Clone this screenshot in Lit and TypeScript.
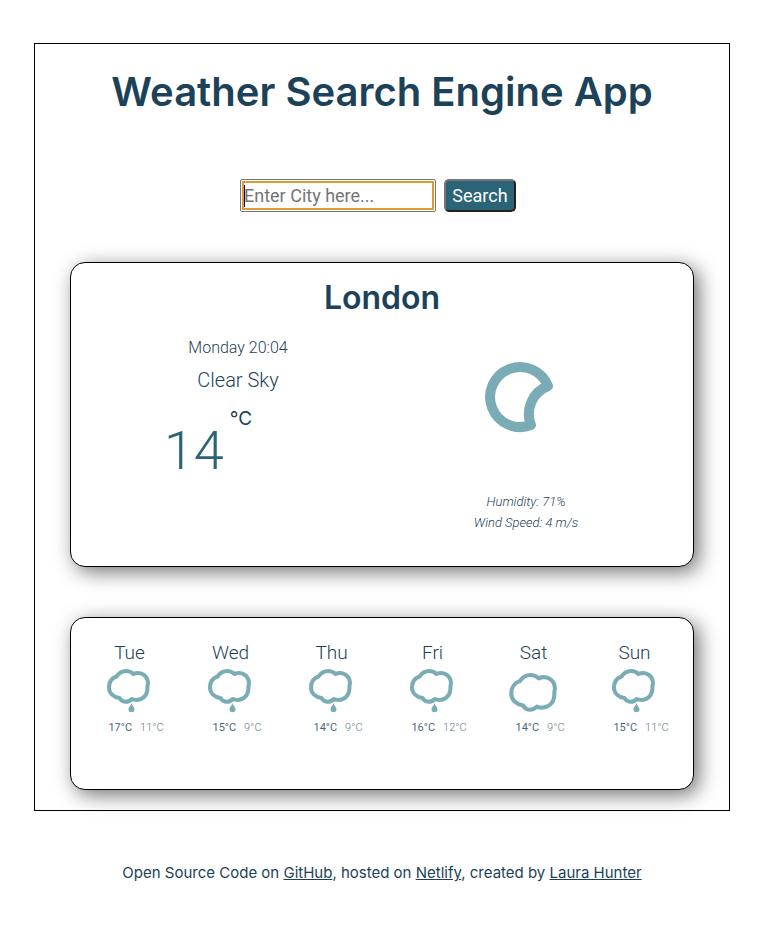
import { LitElement, html, svg, css } from "lit";
import { customElement, property } from "lit/decorators.js";

type Sky = "clear-night" | "rain" | "cloudy";

interface Day {
  name: string;
  sky: Sky;
  max: number;
  min: number;
}

const FORECAST: Day[] = [
  { name: "Tue", sky: "rain", max: 17, min: 11 },
  { name: "Wed", sky: "rain", max: 15, min: 9 },
  { name: "Thu", sky: "rain", max: 14, min: 9 },
  { name: "Fri", sky: "rain", max: 16, min: 12 },
  { name: "Sat", sky: "cloudy", max: 14, min: 9 },
  { name: "Sun", sky: "rain", max: 15, min: 11 },
];

const CLOUD =
  "M12.5 11.5C15 8 18 6 22 6C25 6 27.5 7 29.5 9C36 6 44 10 44 18.5C42.8 21.5 44 23 43 26.5C41.5 33.5 34 36.5 27.8 34C24 38 18 37.5 15.5 33C9.5 32 5 28 5 22.5C5 17 8 13 12.5 11.5Z";

@customElement("sky-icon")
export class SkyIcon extends LitElement {
  @property() sky: Sky = "cloudy";

  static styles = css`
    :host {
      display: block;
      line-height: 0;
    }
    .line {
      fill: none;
      stroke: #7aacb5;
      stroke-linejoin: round;
    }
    .drop {
      fill: #7aacb5;
    }
  `;

  render() {
    if (this.sky === "clear-night") {
      return html`<svg width="128" height="128" viewBox="0 0 128 128" role="img" aria-label="Clear night">
        <path class="line" stroke-width="10" d="M86 53A30 30 0 1 0 69 92A30 30 0 0 1 86 53Z" />
      </svg>`;
    }
    const rain = this.sky === "rain";
    return html`<svg width="50" height="50" viewBox="1 0 50 50" role="img" aria-label=${rain ? "Rain" : "Cloudy"}>
      ${rain
        ? svg`<path class="line" stroke-width="4" d=${CLOUD} />
            <path class="drop" d="M27.5 37.5C28 41 30.5 42 30.5 44.2A3 3 0 0 1 24.5 44.2C24.5 42 27 41 27.5 37.5Z" />`
        : svg`<path class="line" stroke-width="3.6" transform="translate(-2.3 3.2) scale(1.12 1.13)" d=${CLOUD} />`}
    </svg>`;
  }
}

@customElement("app-root")
export class AppRoot extends LitElement {
  static styles = css`
    :host {
      display: block;
      box-sizing: border-box;
      padding: 43px 29px 50px 34px;
      background: #fff;
      color: #1c4259;
      font-family: Roboto, "Liberation Sans", sans-serif;
      text-align: center;
    }
    h1,
    h2,
    p,
    ul {
      margin: 0;
      padding: 0;
    }
    h1,
    h2 {
      font-family: Inter, "Liberation Sans", sans-serif;
      font-weight: 600;
    }
    .frame {
      border: 1px solid #000;
      padding: 18px 35px 20px;
    }
    .title {
      font-size: 40px;
      line-height: 60px;
    }
    .search {
      display: flex;
      justify-content: center;
      gap: 8px;
      margin: 57px 0 50px;
      padding-right: 8px;
      height: 33px;
    }
    .city-input {
      box-sizing: border-box;
      width: 196px;
      padding: 0 3px;
      border: 1px solid #767676;
      border-radius: 2px;
      outline: 2px solid #dd9a35;
      outline-offset: -4px;
      background: linear-gradient(#000, #000) 3px center / 1px 22px no-repeat #fff;
      font: 18px Roboto, sans-serif;
    }
    .city-input::placeholder {
      color: #757575;
    }
    .search-button {
      box-sizing: border-box;
      width: 72px;
      padding: 0;
      border: 2px solid;
      border-color: #767676 #212121 #212121 #767676;
      border-radius: 5px;
      background: #2b6477;
      color: #fff;
      font: 18px Roboto, sans-serif;
    }
    .card {
      border: 1px solid #000;
      border-radius: 15px;
      background: #fff;
      box-shadow: 5px 5px 20px rgba(0, 0, 0, 0.55);
    }
    .current {
      padding: 11px 23px 33px;
      margin-bottom: 50px;
    }
    .place {
      font-size: 32px;
      line-height: 48px;
    }
    .columns {
      display: grid;
      grid-template-columns: 1fr 1fr;
      margin-top: 11px;
    }
    .date {
      margin-top: 3px;
      font-size: 16px;
      font-weight: 300;
      line-height: 24px;
    }
    .sky {
      margin-top: 8px;
      font-size: 20px;
      font-weight: 300;
      line-height: 24px;
    }
    .now {
      display: flex;
      justify-content: center;
      gap: 6px;
      margin-top: 15px;
      padding-right: 60px;
    }
    .degrees {
      padding-top: 14px;
      color: #2b6477;
      font-size: 54px;
      font-weight: 300;
      line-height: 60px;
    }
    .unit {
      font-family: Inter, sans-serif;
      font-size: 19px;
      line-height: 24px;
    }
    .details {
      margin-top: 30px;
      font-size: 13px;
      font-style: italic;
      font-weight: 300;
      line-height: 21px;
    }
    .forecast {
      display: grid;
      grid-template-columns: repeat(6, 1fr);
      padding: 22px 8px 48px;
      list-style: none;
    }
    .day {
      font-size: 19px;
      font-weight: 300;
      line-height: 25px;
    }
    .range {
      display: flex;
      justify-content: center;
      gap: 8px;
      padding-left: 13px;
      font-size: 11px;
      line-height: 26px;
      white-space: nowrap;
    }
    .max {
      opacity: 0.8;
    }
    .min {
      font-weight: 300;
      opacity: 0.7;
    }
    .credits {
      margin-top: 50px;
      font-family: Inter, "Liberation Sans", sans-serif;
      font-size: 15px;
      line-height: 24px;
    }
    .credits a {
      color: inherit;
    }
  `;

  render() {
    return html`
      <main class="frame">
        <h1 class="title">Weather Search Engine App</h1>
        <form class="search" @submit=${(e: Event) => e.preventDefault()}>
          <input class="city-input" type="text" aria-label="City" placeholder="Enter City here..." autocomplete="off" />
          <button class="search-button" type="submit">Search</button>
        </form>
        <section class="card current">
          <h2 class="place">London</h2>
          <div class="columns">
            <div>
              <p class="date">Monday 20:04</p>
              <p class="sky">Clear Sky</p>
              <p class="now"><span class="degrees">14</span><span class="unit">°C</span></p>
            </div>
            <div>
              <sky-icon sky="clear-night"></sky-icon>
              <div class="details">
                <p>Humidity: 71%</p>
                <p>Wind Speed: 4 m/s</p>
              </div>
            </div>
          </div>
        </section>
        <ul class="card forecast">
          ${FORECAST.map(
            (d) => html`<li>
              <p class="day">${d.name}</p>
              <sky-icon .sky=${d.sky}></sky-icon>
              <p class="range"><span class="max">${d.max}°C</span><span class="min">${d.min}°C</span></p>
            </li>`
          )}
        </ul>
      </main>
      <footer class="credits">
        Open Source Code on <a href="#github">GitHub</a>, hosted on <a href="#netlify">Netlify</a>, created by
        <a href="#author">Laura Hunter</a>
      </footer>
    `;
  }
}
